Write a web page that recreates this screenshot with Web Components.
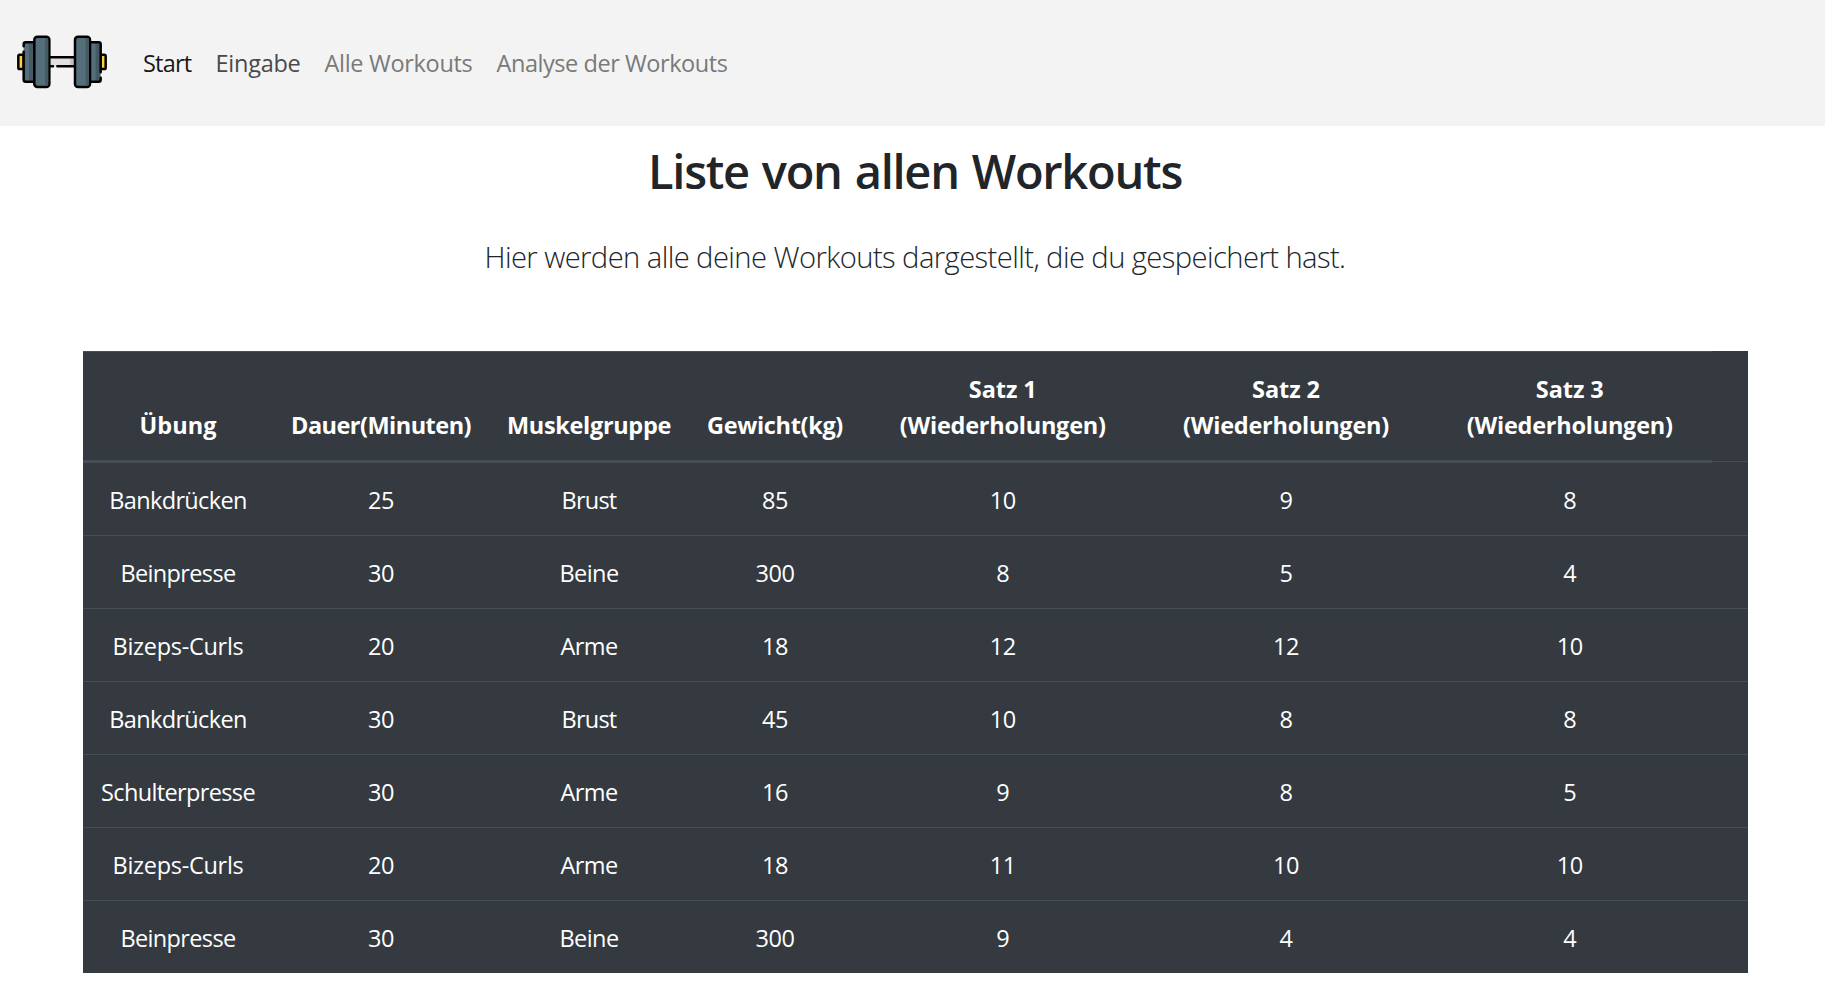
<!DOCTYPE html>
<html lang="de">
<head>
<meta charset="utf-8">
<title>Alle Workouts</title>
<style>
body{margin:0;background:#fff;color:#212529;font-family:"Open Sans","Noto Sans",sans-serif;font-size:23.5px;line-height:36px}
</style>
</head>
<body>
<workout-page></workout-page>
<script>
/* Text with a fixed set width; the spacing between its letters is adjusted to it. */
class FitText extends HTMLElement {
  connectedCallback() {
    const root = this.attachShadow({mode: "open"});
    root.innerHTML = `<style>:host{display:inline-block;white-space:nowrap;text-align:left}span{display:inline-block}</style><span><slot></slot></span>`;
    const w = +this.getAttribute("w");
    if (!w) return;
    const span = root.querySelector("span");
    const n = this.textContent.length;
    span.style.letterSpacing = (w - span.getBoundingClientRect().width) / n + "px";
    this.style.width = w + "px";
  }
}

class DumbbellLogo extends HTMLElement {
  connectedCallback() {
    this.attachShadow({mode: "open"}).innerHTML = `<style>:host{display:block;width:130px;height:80px}svg{display:block}</style>
<svg width="130" height="80" viewBox="0 0 390 240" fill="none" stroke="#000" stroke-width="7.5" stroke-linecap="round" stroke-linejoin="round">
<path d="M150 112h72v27h-72z" fill="#e1dfe1" stroke="none"/><path d="M210 112h12v27h-12z" fill="#c5c3c7" stroke="none"/>
<path d="M150 112h72M150 139h9M172 139h50"/>
<rect x="55" y="104" width="16" height="43" rx="4" fill="#ffd03b"/>
<rect x="301" y="104" width="16" height="43" rx="4" fill="#ffd03b"/>
<path d="M104 67H77q-6 0-6 6V179q0 6 6 6h27z" fill="#546e7a" stroke="none"/>
<path d="M87 70h14v112h-14z" fill="#465a65" stroke="none"/>
<path d="M104 67H77q-6 0-6 6v6M71 95V179q0 6 6 6h27"/>
<path d="M269 67h27q6 0 6 6V179q0 6-6 6h-27z" fill="#546e7a" stroke="none"/>
<path d="M287 70h12v112h-12z" fill="#465a65" stroke="none"/>
<path d="M269 67h27q6 0 6 6V157M302 173v6q0 6-6 6h-27"/>
<rect x="103" y="50" width="45" height="151" rx="9" fill="#546e7a"/>
<path d="M135 54h6q4 0 4 5v133q0 5-4 5h-6z" fill="#465a65" stroke="none"/>
<rect x="225" y="50" width="45" height="151" rx="9" fill="#546e7a"/>
<path d="M257 54h6q4 0 4 5v133q0 5-4 5h-6z" fill="#465a65" stroke="none"/>
</svg>`;
  }
}

class NavBar extends HTMLElement {
  connectedCallback() {
    this.attachShadow({mode: "open"}).innerHTML = `<style>
:host{display:flex;box-sizing:border-box;height:126px;background:#f3f3f3;padding-top:20px}
nav{display:flex;gap:24px;margin-left:13px;padding-top:25px;color:#797979}
.active{color:#181818}.hover{color:#494949}
</style><dumbbell-logo></dumbbell-logo><nav>
<fit-text class="active" w="48.5">Start</fit-text><fit-text class="hover" w="85">Eingabe</fit-text><fit-text w="148">Alle Workouts</fit-text><fit-text w="231">Analyse der Workouts</fit-text></nav>`;
  }
}

class PageIntro extends HTMLElement {
  connectedCallback() {
    this.attachShadow({mode: "open"}).innerHTML = `<style>
:host{display:block;text-align:center;padding:16px 0 0 5px}
h1{margin:0;font-size:47px;font-weight:600;line-height:58px;height:58px;word-spacing:2px}
p{margin:0;padding-top:35px;font-size:29.2px;font-weight:300;line-height:45px;height:45px}
</style><h1><fit-text w="534">Liste von allen Workouts</fit-text></h1>
<p><fit-text w="861">Hier werden alle deine Workouts dargestellt, die du gespeichert hast.</fit-text></p>`;
  }
}

class WorkoutTable extends HTMLElement {
  connectedCallback() {
    const widths = {"Bankdrücken": 137.5, "Beinpresse": 115, "Bizeps-Curls": 131, "Schulterpresse": 154, "Brust": 55, "Beine": 59, "Arme": 57};
    const rows = [
      ["Bankdrücken", 25, "Brust", 85, 10, 9, 8],
      ["Beinpresse", 30, "Beine", 300, 8, 5, 4],
      ["Bizeps-Curls", 20, "Arme", 18, 12, 12, 10],
      ["Bankdrücken", 30, "Brust", 45, 10, 8, 8],
      ["Schulterpresse", 30, "Arme", 16, 9, 8, 5],
      ["Bizeps-Curls", 20, "Arme", 18, 11, 10, 10],
      ["Beinpresse", 30, "Beine", 300, 9, 4, 4]
    ];
    const cell = v => `<div><fit-text w="${widths[v] || String(v).length * 12.94}">${v}</fit-text></div>`;
    const sets = [1, 2, 3].map(i => `<div><fit-text w="68">Satz ${i}</fit-text><fit-text w="206">(Wiederholungen)</fit-text></div>`).join("");
    this.attachShadow({mode: "open"}).innerHTML = `<style>
:host{display:block;width:1665px;margin:71px 0 0 83px;background:#343a40;color:#fff}
.row{display:grid;grid-template-columns:190px 216px 200px 172px 283.5px 283px 284.5px 36px;box-sizing:border-box;height:73px;text-align:center;border-top:1px solid #454d55;padding-top:19px}
.row>div{height:36px}
.head{height:112px;font-weight:700;align-items:start;border:0;padding:0}
.head>div{box-sizing:border-box;height:112px;display:flex;flex-direction:column;justify-content:flex-end;align-items:center;padding-bottom:17px;border-top:1px solid #454d55;border-bottom:3px solid #454d55}
.head>.end{border-top-color:transparent;border-bottom:1px solid #454d55;height:111px}
.first{border:0;height:72px;padding-top:19px}
</style><div class="row head">
<div><fit-text w="77">Übung</fit-text></div><div><fit-text w="180">Dauer(Minuten)</fit-text></div><div><fit-text w="164">Muskelgruppe</fit-text></div><div><fit-text w="136">Gewicht(kg)</fit-text></div>${sets}<div class="end"></div></div>
${rows.map((r, i) => `<div class="row${i ? "" : " first"}">${r.map(cell).join("")}</div>`).join("")}`;
  }
}

class WorkoutPage extends HTMLElement {
  connectedCallback() {
    this.attachShadow({mode: "open"}).innerHTML = `<style>:host{display:block}</style><nav-bar></nav-bar><page-intro></page-intro><workout-table></workout-table>`;
  }
}
customElements.define("fit-text", FitText);
customElements.define("dumbbell-logo", DumbbellLogo);
customElements.define("nav-bar", NavBar);
customElements.define("page-intro", PageIntro);
customElements.define("workout-table", WorkoutTable);
customElements.define("workout-page", WorkoutPage);
</script>
</body>
</html>
